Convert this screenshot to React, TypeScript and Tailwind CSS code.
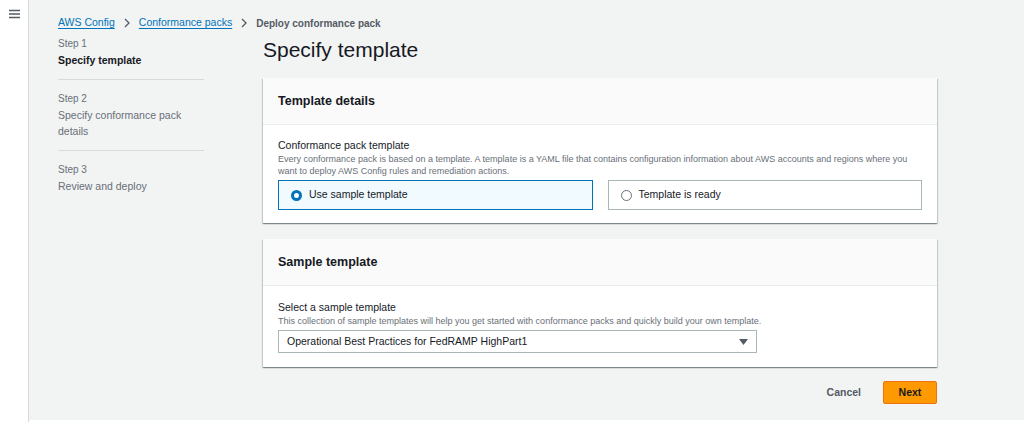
import React, { useState } from 'react';

const font = { fontFamily: '"Liberation Sans", Arial, sans-serif' };

function Radio({ checked }: { checked: boolean }) {
  return checked ? (
    <span className="w-[11px] h-[11px] rounded-full border-[3.5px] border-[#0073bb] bg-white shrink-0" />
  ) : (
    <span className="w-[11px] h-[11px] rounded-full border border-[#687078] bg-white shrink-0" />
  );
}

const cardShadow =
  'bg-white shadow-[0_1px_1px_0_rgba(0,28,36,0.3),1px_1px_1px_0_rgba(0,28,36,0.15),-1px_1px_1px_0_rgba(0,28,36,0.15)]';

export default function App() {
  const [choice, setChoice] = useState<'sample' | 'ready'>('sample');

  return (
    <div className="flex w-[1024px] h-[422px] bg-white text-[#16191f] overflow-hidden" style={font}>
      {/* Side strip */}
      <div className="w-[29px] shrink-0 border-r border-[#d5dbdb] flex justify-center pt-[9px]">
        <svg width="11" height="10" viewBox="0 0 11 10" className="text-[#545b64]">
          <path d="M0 1.5h11M0 5h11M0 8.5h11" stroke="currentColor" strokeWidth="1.4" />
        </svg>
      </div>

      <div className="flex-1 bg-[#f2f3f3] mb-[2px] pl-[29px] pr-[87px]">
        {/* Breadcrumb */}
        <div className="flex items-center h-[22px] mt-[12px] text-[10.5px]">
          <a className="text-[#0073bb] underline underline-offset-2 decoration-[#0073bb]">AWS Config</a>
          <svg width="8" height="10" viewBox="0 0 8 10" className="mx-[8px]">
            <path d="M2 1l4 4-4 4" fill="none" stroke="#545b64" strokeWidth="1.3" />
          </svg>
          <a className="text-[#0073bb] underline underline-offset-2 decoration-[#0073bb]">Conformance packs</a>
          <svg width="8" height="10" viewBox="0 0 8 10" className="mx-[8px]">
            <path d="M2 1l4 4-4 4" fill="none" stroke="#545b64" strokeWidth="1.3" />
          </svg>
          <span className="text-[#545b64] font-bold text-[10px]">Deploy conformance pack</span>
        </div>

        <div className="flex">
          {/* Steps */}
          <div className="w-[146px] shrink-0 mr-[59px] text-[10.5px]">
            <div className="pt-[2px] pb-[11px] border-b border-[#d5dbdb]">
              <div className="text-[10px] text-[#687078] leading-[16px]">Step 1</div>
              <div className="font-bold leading-[16px]">Specify template</div>
            </div>
            <div className="pt-[11px] pb-[11px] border-b border-[#d5dbdb]">
              <div className="text-[10px] text-[#687078] leading-[16px]">Step 2</div>
              <div className="text-[#687078] leading-[16px]">Specify conformance pack details</div>
            </div>
            <div className="pt-[11px]">
              <div className="text-[10px] text-[#687078] leading-[16px]">Step 3</div>
              <div className="text-[#687078] leading-[16px]">Review and deploy</div>
            </div>
          </div>

          {/* Main content */}
          <div className="flex-1">
            <h1 className="text-[21px] leading-[28px] text-[#16191f] mt-[2px] mb-[14px]">Specify template</h1>

            <div className={cardShadow}>
              <div className="bg-[#fafafa] border-b border-[#eaeded] h-[47px] px-[15px] flex items-center">
                <h2 className="text-[12.5px] font-bold">Template details</h2>
              </div>
              <div className="px-[15px] pt-[13px] pb-[13px]">
                <div className="text-[10.5px] leading-[15px]">Conformance pack template</div>
                <div className="text-[9px] leading-[12px] text-[#687078]">
                  Every conformance pack is based on a template. A template is a YAML file that contains configuration information about AWS accounts and regions where you want to deploy AWS Config rules and remediation actions.
                </div>
                <div className="grid grid-cols-2 gap-[15px] mt-[3px]">
                  <button
                    onClick={() => setChoice('sample')}
                    className={`h-[30px] flex items-center gap-[7px] px-[12px] text-[10.5px] border ${
                      choice === 'sample' ? 'bg-[#f1faff] border-[#0073bb]' : 'bg-white border-[#aab7b8]'
                    }`}
                  >
                    <Radio checked={choice === 'sample'} />
                    Use sample template
                  </button>
                  <button
                    onClick={() => setChoice('ready')}
                    className={`h-[30px] flex items-center gap-[7px] px-[12px] text-[10.5px] border ${
                      choice === 'ready' ? 'bg-[#f1faff] border-[#0073bb]' : 'bg-white border-[#aab7b8]'
                    }`}
                  >
                    <Radio checked={choice === 'ready'} />
                    Template is ready
                  </button>
                </div>
              </div>
            </div>

            <div className={`${cardShadow} mt-[16px]`}>
              <div className="bg-[#fafafa] border-b border-[#eaeded] h-[47px] px-[15px] flex items-center">
                <h2 className="text-[12.5px] font-bold">Sample template</h2>
              </div>
              <div className="px-[15px] pt-[13px] pb-[14px]">
                <div className="text-[10.5px] leading-[16px]">Select a sample template</div>
                <div className="text-[9px] leading-[12px] text-[#687078]">
                  This collection of sample templates will help you get started with conformance packs and quickly build your own template.
                </div>
                <div className="w-[479px] h-[23px] mt-[3px] border border-[#aab7b8] bg-white flex items-center justify-between px-[8px] text-[10.5px]">
                  <span>Operational Best Practices for FedRAMP HighPart1</span>
                  <svg width="9" height="6" viewBox="0 0 9 6">
                    <path d="M0 0h9L4.5 6z" fill="#545b64" />
                  </svg>
                </div>
              </div>
            </div>

            <div className="flex justify-end items-center mt-[14px] gap-[22px]">
              <button className="text-[10.5px] font-bold text-[#545b64]">Cancel</button>
              <button className="h-[23px] w-[54px] bg-[#ff9900] border border-[#ec7211] rounded-[2px] text-[10.5px] font-bold text-[#16191f]">
                Next
              </button>
            </div>
          </div>
        </div>
      </div>
    </div>
  );
}
